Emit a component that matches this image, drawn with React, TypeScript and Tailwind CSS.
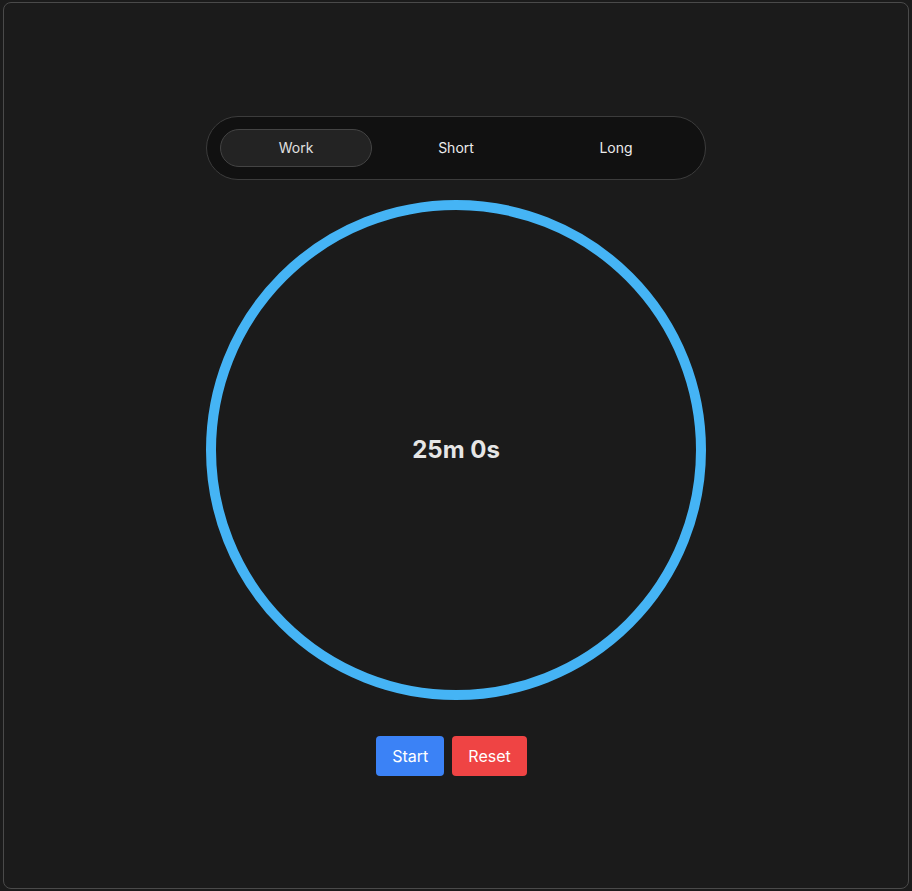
import { useState } from 'react'

const modes = [
  { key: 'work', label: 'Work', minutes: 25 },
  { key: 'short', label: 'Short', minutes: 5 },
  { key: 'long', label: 'Long', minutes: 15 },
]

export default function App() {
  const [mode, setMode] = useState('work')
  const current = modes.find((m) => m.key === mode) ?? modes[0]

  return (
    <div className="min-h-screen bg-[#1b1b1b] px-[3px] pt-[2px] pb-[2px] font-['Inter',sans-serif]">
      <div className="h-[887px] rounded-lg border border-[#4a4a4a] bg-[#1b1b1b] flex flex-col items-center">
        {/* Mode switch */}
        <div className="mt-[113px] flex gap-2 rounded-full border border-[#3c3c3c] bg-[#111111] px-[13px] py-3">
          {modes.map((m) => (
            <button
              key={m.key}
              onClick={() => setMode(m.key)}
              className={
                m.key === mode
                  ? 'w-[152px] h-[38px] rounded-full border border-[#444] bg-[#232323] text-sm text-[#e0e0e0]'
                  : 'w-[152px] h-[38px] rounded-full border border-transparent text-sm text-[#ececec]'
              }
            >
              {m.label}
            </button>
          ))}
        </div>

        {/* Timer ring */}
        <div className="mt-5 relative w-[500px] h-[500px] flex items-center justify-center">
          <svg width="500" height="500" viewBox="0 0 500 500" className="absolute inset-0">
            <circle cx="250" cy="250" r="245" fill="none" stroke="#45b4f5" strokeWidth="10" />
          </svg>
          <span className="relative text-2xl font-bold text-[#e6e6e6]">{current.minutes}m 0s</span>
        </div>

        {/* Controls */}
        <div className="mt-9 flex gap-2 pr-[9px]">
          <button className="h-10 rounded bg-[#3b82f6] px-4 text-base text-white">Start</button>
          <button className="h-10 rounded bg-[#ef4444] px-4 text-base text-white">Reset</button>
        </div>
      </div>
    </div>
  )
}
